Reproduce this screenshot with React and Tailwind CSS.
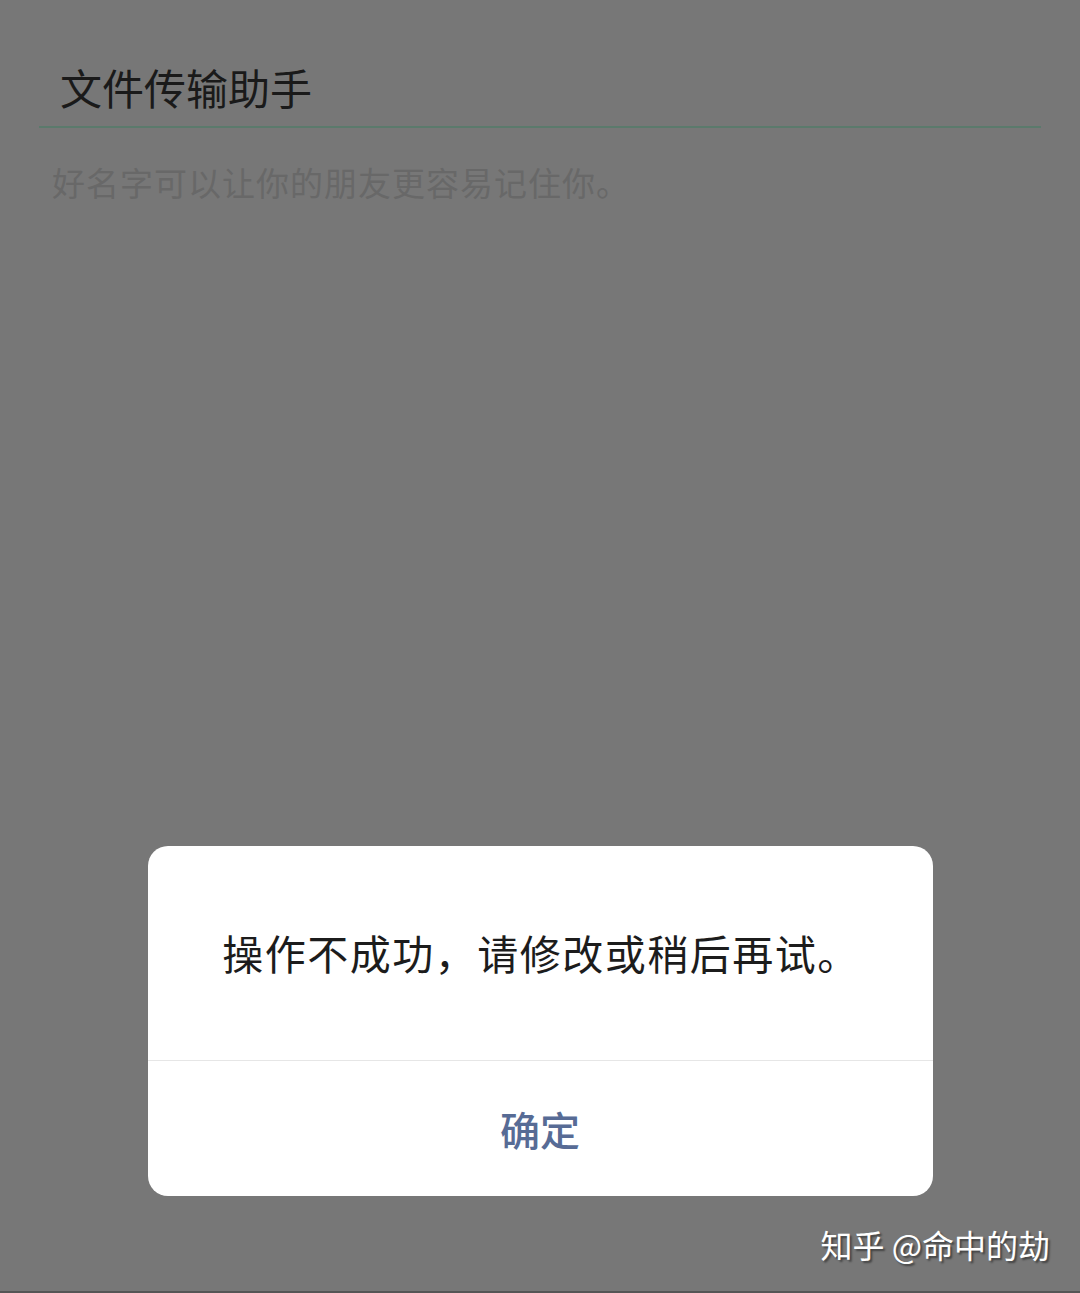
const font = { fontFamily: '"Noto Sans CJK SC", "Noto Sans", sans-serif' };

const App = () => {
  return (
    <div
      className="w-[1080px] h-[1293px] bg-[#777777] flex flex-col border-b-2 border-[#555555]"
      style={font}
    >
      <div className="pt-[61px] px-[39px]">
        <div className="pl-[21px] text-[42px] leading-[52px] text-[#1a1a1a]">文件传输助手</div>
        <div className="mt-[13px] h-[2px] w-[1002px] bg-[#5b7a6c]" />
        <div className="mt-[32px] pl-[13px] text-[33px] leading-[44px] tracking-[1px] text-[#686868]">
          好名字可以让你的朋友更容易记住你。
        </div>
      </div>

      <div className="mt-[642px] mx-auto w-[785px] bg-white rounded-[20px] overflow-hidden flex flex-col">
        <div className="h-[214px] flex items-center justify-center text-[41px] tracking-[1.5px] text-[#1c1c1c] pl-[2px]">
          操作不成功，请修改或稍后再试。
        </div>
        <div className="h-px bg-[#e6e6e6]" />
        <div className="h-[135px] flex items-center justify-center text-[40px] font-medium text-[#576b95]">
          确定
        </div>
      </div>

      <div className="mt-[24px] pr-[30px] flex justify-end">
        <span className="text-[32px] text-white [text-shadow:2px_2px_2px_rgba(0,0,0,0.45)]">
          知乎 @命中的劫
        </span>
      </div>
    </div>
  );
};

export default App;
